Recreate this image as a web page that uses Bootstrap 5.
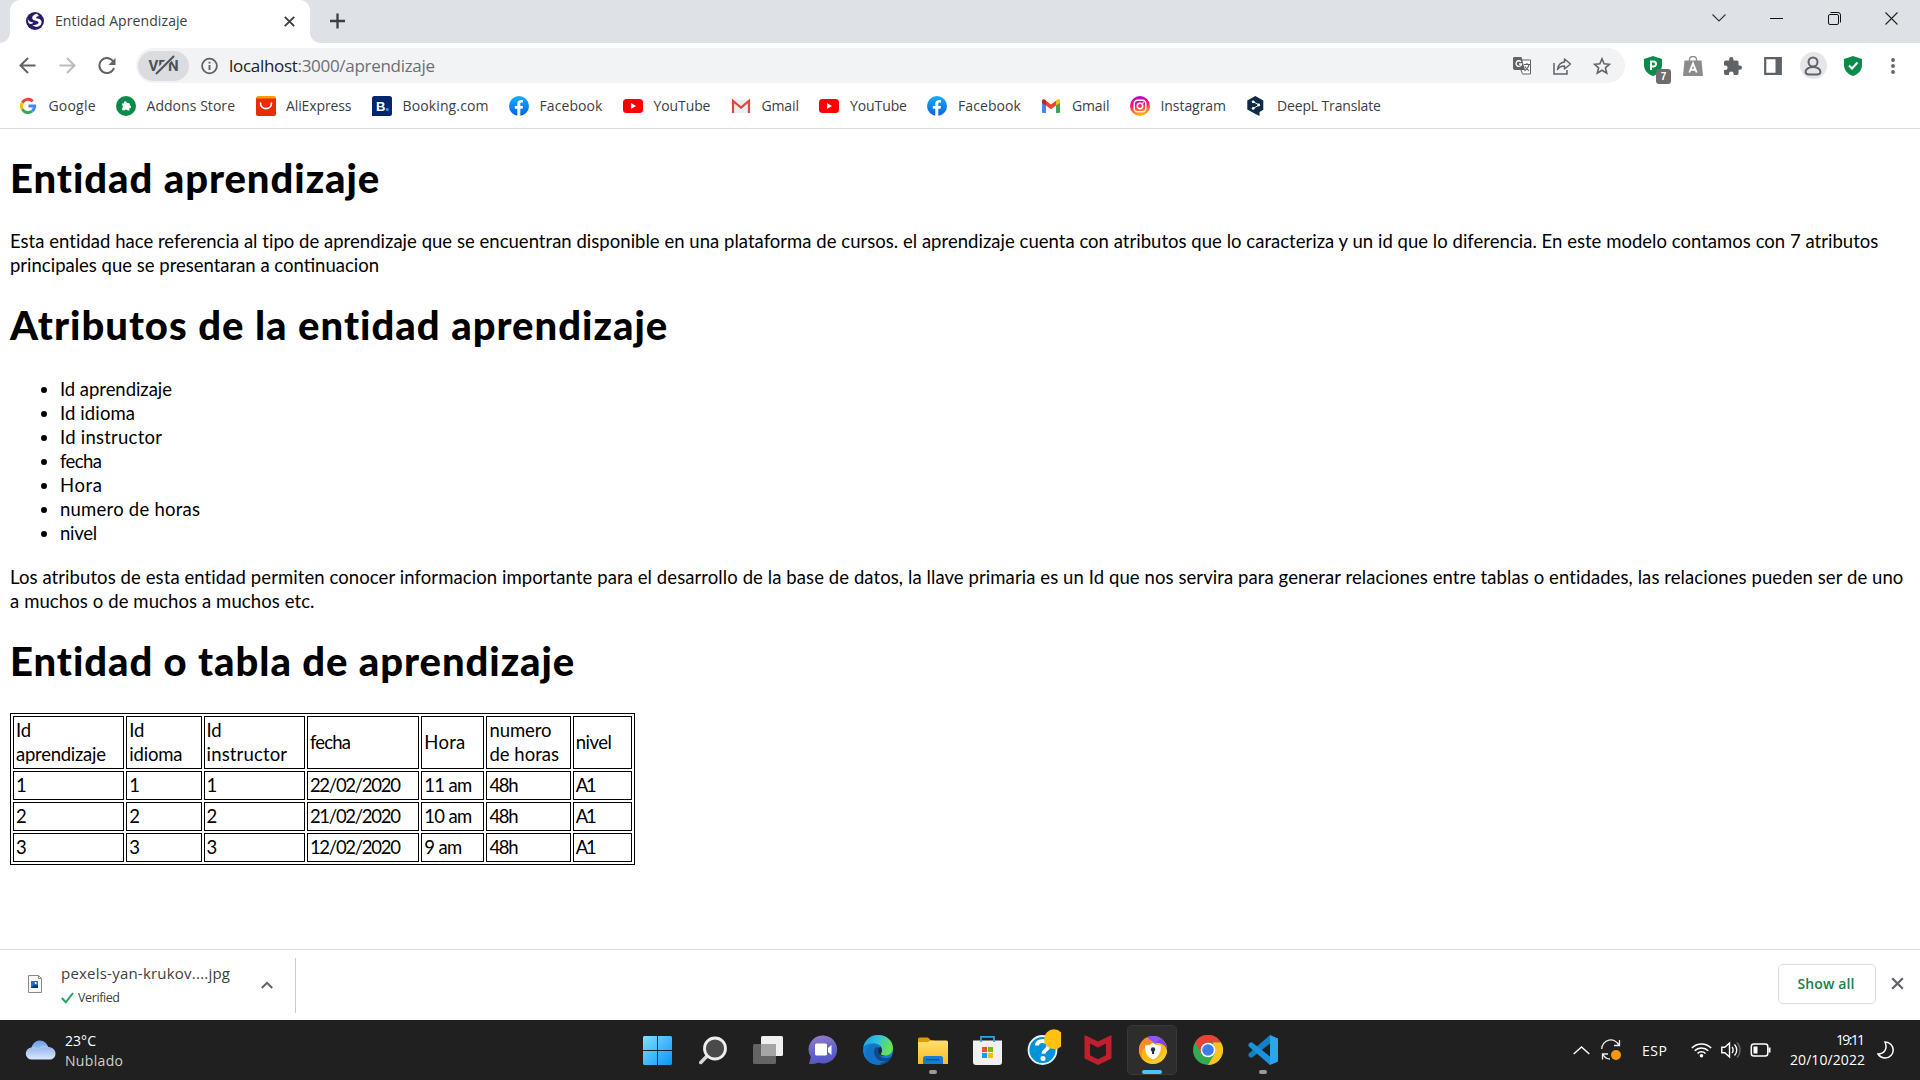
<!DOCTYPE html>
<html lang="es">
<head>
<meta charset="utf-8">
<title>Entidad Aprendizaje</title>
<link href="https://cdn.jsdelivr.net/npm/bootstrap@5.3.0/dist/css/bootstrap.min.css" rel="stylesheet">
<style>
body{width:1920px;height:1080px;overflow:hidden;font-family:"Open Sans","Noto Sans",sans-serif;font-size:14px;color:#3c4043;background:#fff}
svg{display:block;flex:none}
[data-w]{display:inline-block;white-space:nowrap}
.tabstrip{height:43px;background:#dee1e6;padding-left:10px}
.browser-tab{width:300px;height:43px;background:#fff;border-radius:10px 10px 0 0;padding:0 15px 1px 16px}
.browser-tab::before,.browser-tab::after{content:"";position:absolute;bottom:0;width:10px;height:10px}
.browser-tab::before{left:-10px;background:radial-gradient(circle at 0 0,#dee1e6 9.5px,#fff 10px)}
.browser-tab::after{right:-10px;background:radial-gradient(circle at 100% 0,#dee1e6 9.5px,#fff 10px)}
.tab-title{margin-left:11px;line-height:20px}
.win-btn{width:57.3px;height:36px}
.toolbar{height:45px;padding:0 7px 0 7px}
.slot{width:40px;height:40px;flex:none}
.omnibox{height:35px;background:#f1f3f4;border-radius:18px;margin:0 8px 0 9px;padding:0 3px 0 2px}
.vpn{width:51px;height:30px;border-radius:15px;background:#dadce0;color:#4d5156;font:700 15px/30px Roboto,sans-serif}
.vpn svg{position:absolute;left:16px;top:3px}
.url{font-size:17px;line-height:24px;padding-left:3px;color:#202124}
.url .path{color:#6b6f73}
.ext-count{right:2px;bottom:2px;width:15px;height:15px;border-radius:3px;background:#6e6e6e;color:#fff;font:700 10px/15px "Liberation Sans",sans-serif;text-align:center}
.avatar-bg{width:27px;height:27px;background:#e4e6ea}
.bookmarks{height:41px;padding:0 18px 5px;border-bottom:1px solid #d9dbdd;gap:20.5px}
.bookmarks>div{gap:10.5px;line-height:20px}
.page{height:820px;padding:26px 10px 0;color:#000;font:18.5px/24px Lato,"Noto Sans",sans-serif}
.page h1{font:900 40px/46px Lato,sans-serif;margin:0}
.page .gap-title{margin-top:25px}
.page ul{padding-left:50px;margin:28.5px 0 20px}
.entity{border:1px solid #000;border-collapse:separate;border-spacing:2.5px 2px;table-layout:fixed;width:625px;margin-top:29px}
.entity td{border:1px solid #000;padding:1px 1px 1px 2px;height:29px;white-space:nowrap;overflow:hidden}
.entity tr:first-child td{height:53px}
.downloads{height:71px;border-top:1px solid #d9dbdd;padding-left:28px;padding-right:16px}
.dl-item{width:268px;height:55px;border-right:1px solid #c9cccf;margin-top:8px}
.dl-text{padding:5px 0 0 3px}
.dl-name{font-size:15px;line-height:20px}
.dl-state{font-size:12.5px;line-height:20px;padding-top:5px}
.dl-item .dl-caret{margin:23px 22px 0 auto}
.show-all{width:98px;height:40px;border:1px solid #dadce0;border-radius:5px;color:#188048;font-weight:600;margin-right:15px;padding-right:2px}
.dl-actions{padding-bottom:3px}
.taskbar{height:60px;background:#202020;color:#fff;padding-left:25px}
.weather{width:605px;line-height:20px}
.weather-text{padding:2px 0 0 1px}
.sky{color:#cfcfcf}
.app{width:55px;height:60px;flex:none}
.running::after{content:"";position:absolute;left:24px;top:50px;width:8px;height:4px;border-radius:2px;background:#9a9a9a}
.active-app::before{content:"";position:absolute;left:2px;top:5px;width:50px;height:50px;border-radius:5px;background:#2d2d2d;border:1px solid #383838}
.active-app::after{content:"";position:absolute;left:17px;top:50px;width:20px;height:4px;border-radius:2px;background:#4cc2ff}
.active-app svg{position:relative}
.tray{padding-right:26px}
.tray .lang{margin-left:12px}
.tray .battery{margin-left:9px;margin-right:-2px}
.clock{line-height:20px;text-align:right}
</style>
<script src="https://cdn.jsdelivr.net/npm/bootstrap@5.3.0/dist/js/bootstrap.bundle.min.js"></script>
</head>
<body class="d-flex flex-column m-0">

<header>
  <div class="tabstrip d-flex">
    <div class="browser-tab position-relative d-flex align-items-center">
      <svg width="18" height="18" viewBox="0 0 18 18"><circle cx="9" cy="9" r="9" fill="#2b1b66"/><path d="M11 1.800C7.500 2.500 5.500 5 6.500 7s6 1.500 6 3.500-3.500 2.500-6 2.500c2 2.500 6 2.500 8.500-.5 2-4-1-5.500-3.500-6S10 4.500 13 4z" fill="#fff"/><path d="M1.500 6c1 3.500 3 4 6 4.500-1 1.500-3.500 2-5 .5z" fill="#fff"/></svg>
      <span class="tab-title"><span data-w="132.500">Entidad Aprendizaje</span></span>
      <svg class="ms-auto" width="11" height="11" viewBox="0 0 11 11" stroke="#3c4043" stroke-width="1.900"><path d="M.8.8l9.400 9.400M10.200.8L.8 10.200"/></svg>
    </div>
    <svg class="ms-3 mt-2" width="24" height="26" viewBox="0 0 24 26" stroke="#3c4043" stroke-width="2.300"><path d="M11.500 5.500v15M4 13h15"/></svg>
    <div class="ms-auto d-flex">
      <div class="win-btn d-flex align-items-center justify-content-center"><svg width="14" height="8" viewBox="0 0 14 8" fill="none" stroke="#333" stroke-width="1.100"><path d="M.5.5L7 7 13.500.5"/></svg></div>
      <div class="win-btn d-flex align-items-center justify-content-center"><svg width="13" height="3" viewBox="0 0 13 3"><path d="M0 1h13v1H0z" fill="#111"/></svg></div>
      <div class="win-btn d-flex align-items-center justify-content-center"><svg width="13" height="13" viewBox="0 0 13 13" fill="none" stroke="#111"><rect x=".5" y="2.500" width="10" height="10" rx="1.500"/><path d="M2.500.5H10A2.500 2.500 0 0 1 12.500 3v7.500"/></svg></div>
      <div class="win-btn d-flex align-items-center justify-content-center"><svg width="13" height="13" viewBox="0 0 13 13" stroke="#222" stroke-width="1.100"><path d="M.5.5l12 12M12.500.5l-12 12"/></svg></div>
    </div>
  </div>

  <div class="toolbar d-flex align-items-center">
    <div class="slot d-flex align-items-center justify-content-center"><svg width="17" height="17" viewBox="0 0 17 17" fill="none" stroke="#5f6368" stroke-width="2"><path d="M16.500 8.500H1.800M9 1L1.500 8.500 9 16"/></svg></div>
    <div class="slot d-flex align-items-center justify-content-center"><svg width="17" height="17" viewBox="0 0 17 17" fill="none" stroke="#babcbe" stroke-width="2"><path d="M.5 8.500h14.700M8 1l7.500 7.500L8 16"/></svg></div>
    <div class="slot d-flex align-items-center justify-content-center"><svg width="18" height="18" viewBox="0 0 18 18" fill="none" stroke="#5f6368" stroke-width="2"><path d="M15.500 5A7.500 7.500 0 1 0 16 11"/><path d="M17.500 1v7h-7z" fill="#5f6368" stroke="none"/></svg></div>
    <div class="omnibox d-flex align-items-center flex-grow-1">
      <div class="vpn position-relative text-center"><span data-w="30">VPN</span><svg width="22" height="22" viewBox="0 0 22 22"><path d="M1 20L19 2" stroke="#dadce0" stroke-width="5"/><path d="M2 20L20 2" stroke="#4d5156" stroke-width="2"/></svg></div>
      <svg class="ms-2 me-1" width="25" height="18" viewBox="-4 0 25 18" fill="none" stroke="#5f6368"><circle cx="8.500" cy="9" r="7.400" stroke-width="1.800"/><path d="M8.500 8v5M8.500 4.800v1.800" stroke-width="1.900"/></svg>
      <div class="url"><span data-w="206">localhost<span class="path">:3000/aprendizaje</span></span></div>
      <div class="ms-auto d-flex">
        <div class="slot d-flex align-items-center justify-content-center"><svg width="19" height="18" viewBox="0 0 19 18"><path d="M8 3h9.500v14H9.500L8 13z" fill="#fff" stroke="#5f6368"/><path d="M1 0h7.500l3.500 13H2a2 2 0 0 1-2-2V1.500A1.500 1.500 0 0 1 1 0z" fill="#5f6368"/><path d="M8 4.800A2.800 2.800 0 1 0 8.600 7H6" fill="none" stroke="#fff" stroke-width="1.300"/><path d="M11 7.500h6M14 6v1.500M16 7.500c-.5 3-2.500 5-4.500 6.500M12 9.500c1 2 2.500 3 4 4.500" fill="none" stroke="#5f6368" stroke-width="1.100"/></svg></div>
        <div class="slot d-flex align-items-center justify-content-center"><svg width="19" height="18" viewBox="0 0 19 18" fill="none" stroke="#5f6368" stroke-width="1.500"><path d="M1 6v11h13v-4"/><path d="M11.500 2l6 5-6 5V9C8 9 6 10 4.500 12.500 5 8.500 7.500 5.500 11.500 5z" stroke-linejoin="round"/></svg></div>
        <div class="slot d-flex align-items-center justify-content-center"><svg width="18" height="18" viewBox="0 0 18 18" fill="none" stroke="#5f6368" stroke-width="1.600"><path d="M9 1.800l2.100 5 5.400.5-4.100 3.500 1.300 5.300L9 13.300l-4.700 2.800 1.300-5.300-4.100-3.500 5.400-.5z"/></svg></div>
      </div>
    </div>
    <div class="slot position-relative d-flex align-items-center justify-content-center"><svg width="18" height="20" viewBox="0 0 18 20"><path d="M9 0l9 3v6c0 5-3.500 9-9 11C3.500 18 0 14 0 9V3z" fill="#0b8a4b"/><path d="M7 14V5.500h2.500a2.500 2.500 0 0 1 0 5H7" fill="none" stroke="#fff" stroke-width="2"/></svg><span class="ext-count position-absolute">7</span></div>
    <div class="slot d-flex align-items-center justify-content-center"><svg width="20" height="20" viewBox="0 0 20 20"><path d="M1.500 4.500h17L20 20H0z" fill="#8b8b8b"/><path d="M6.500 5V3a3 3 0 0 1 3-2.500h1a3 3 0 0 1 3 2.500v2" fill="none" stroke="#8b8b8b" stroke-width="1.300"/><path d="M6.300 16.500L10 7.500l3.700 9M7.500 13.800h5" fill="none" stroke="#fff" stroke-width="1.900"/></svg></div>
    <div class="slot d-flex align-items-center justify-content-center"><svg width="18" height="18" viewBox="2 1 21 21" fill="#5f6368"><path d="M20.500 11H19V7a2 2 0 0 0-2-2h-4V3.500a2.500 2.500 0 0 0-5 0V5H4a2 2 0 0 0-2 2v3.800h1.500a2.700 2.700 0 0 1 0 5.400H2V20a2 2 0 0 0 2 2h3.800v-1.500a2.700 2.700 0 0 1 5.400 0V22H17a2 2 0 0 0 2-2v-4h1.500a2.500 2.500 0 0 0 0-5z"/></svg></div>
    <div class="slot d-flex align-items-center justify-content-center"><svg width="18" height="18" viewBox="0 0 18 18"><path d="M1.200 1.200h15.600v15.600H1.200z" fill="none" stroke="#5f6368" stroke-width="2.200"/><path d="M11.500 1H17v16h-5.500z" fill="#5f6368"/></svg></div>
    <div class="slot d-flex align-items-center justify-content-center"><div class="avatar-bg rounded-circle d-flex align-items-center justify-content-center"><svg width="18" height="20" viewBox="0 0 18 20" fill="none" stroke="#5f6368" stroke-width="2"><circle cx="9" cy="6" r="4.500"/><path d="M1.500 16c0-3 3.500-5 7.500-5s7.500 2 7.500 5-4 2.500-7.500 2.500S1.500 19 1.500 16z"/></svg></div></div>
    <div class="slot d-flex align-items-center justify-content-center"><svg width="18" height="20" viewBox="0 0 18 20"><path d="M9 0l9 3v6c0 5-3.500 9-9 11C3.500 18 0 14 0 9V3z" fill="#0b8a4b"/><path d="M5 9.500l3 3 5.500-6" fill="none" stroke="#fff" stroke-width="2"/></svg></div>
    <div class="slot d-flex align-items-center justify-content-center"><svg width="4" height="16" viewBox="0 0 4 16" fill="#5f6368"><circle cx="2" cy="2" r="1.900"/><circle cx="2" cy="8" r="1.900"/><circle cx="2" cy="14" r="1.900"/></svg></div>
  </div>

  <svg width="0" height="0" class="position-absolute">
    <defs>
      <linearGradient id="fbg" x2="0" y2="1"><stop stop-color="#19aefb"/><stop offset="1" stop-color="#0062e0"/></linearGradient>
      <linearGradient id="igg" x1=".3" y1="0" x2=".5" y2="1"><stop stop-color="#b000e8"/><stop offset=".45" stop-color="#ff1070"/><stop offset="1" stop-color="#ffc800"/></linearGradient>
      <symbol id="fb" viewBox="0 0 20 20"><circle cx="10" cy="10" r="10" fill="url(#fbg)"/><path d="M8.300 20v-7.200H5.800V10h2.500V7.800C8.300 5.300 9.800 4 12 4c1 0 2 .2 2 .2v2.400h-1.200c-1.200 0-1.500.7-1.500 1.500V10H14l-.5 2.800h-2.200V20z" fill="#fff"/></symbol>
      <symbol id="yt" viewBox="0 0 20 20"><rect y="3" width="20" height="14" rx="3.500" fill="#f00"/><path d="M8 7l5 3-5 3z" fill="#fff"/></symbol>
    </defs>
  </svg>
  <nav class="bookmarks d-flex align-items-center">
    <div class="d-flex align-items-center"><svg width="20" height="20" viewBox="-1.500 -1.500 21 21" fill="none" stroke-width="3"><path d="M14 4A7 7 0 0 0 3 5.500" stroke="#ea4335"/><path d="M3 5.500a7 7 0 0 0 0 7" stroke="#fbbc05"/><path d="M3 12.500A7 7 0 0 0 13.300 14.500" stroke="#34a853"/><path d="M13.300 14.500A7 7 0 0 0 16 9H9.500" stroke="#4285f4"/></svg><span data-w="47">Google</span></div>
    <div class="d-flex align-items-center"><svg width="20" height="20" viewBox="0 0 20 20"><circle cx="10" cy="10" r="10" fill="#0b8a4b"/><path d="M6 7.500h2a1.500 1.500 0 1 1 2.800-.8l3 .8v2a1.300 1.300 0 1 1-.5 2.500l.2 2.500h-2a1.500 1.500 0 0 0-2.800 0L6 14l.3-2.200a1.300 1.300 0 0 0 0-2.300z" fill="#fff"/></svg><span data-w="88.500">Addons Store</span></div>
    <div class="d-flex align-items-center"><svg width="20" height="20" viewBox="0 0 20 20"><rect width="20" height="20" rx="2.500" fill="#ff9a00"/><path d="M0 2.500h20v15a2.500 2.500 0 0 1-2.500 2.500h-15A2.500 2.500 0 0 1 0 17.500z" fill="#e62e04"/><path d="M4.500 7c0 7.500 11 7.500 11 0" fill="none" stroke="#fff" stroke-width="1.700" stroke-linecap="round"/></svg><span data-w="65.500">AliExpress</span></div>
    <div class="d-flex align-items-center"><svg width="20" height="20" viewBox="0 0 20 20"><path d="M2.500 0h15A2.500 2.500 0 0 1 20 2.500v15a2.500 2.500 0 0 1-2.500 2.500H0V2.500A2.500 2.500 0 0 1 2.500 0z" fill="#00266b"/><text x="4" y="14.800" font-family="Liberation Sans" font-weight="700" font-size="13" fill="#fff">B</text><circle cx="15.200" cy="13.500" r="1.600" fill="#18a4ef"/></svg><span data-w="86">Booking.com</span></div>
    <div class="d-flex align-items-center"><svg width="20" height="20"><use href="#fb"/></svg><span data-w="63">Facebook</span></div>
    <div class="d-flex align-items-center"><svg width="20" height="20"><use href="#yt"/></svg><span data-w="57">YouTube</span></div>
    <div class="d-flex align-items-center"><svg width="20" height="20" viewBox="0 0 20 20"><path d="M1.500 4h17v13h-17z" fill="#ededed"/><path d="M2 17V4.800l8 6.700 8-6.700V17" fill="none" stroke="#d94b40" stroke-width="2.200"/></svg><span data-w="37.500">Gmail</span></div>
    <div class="d-flex align-items-center"><svg width="20" height="20"><use href="#yt"/></svg><span data-w="57">YouTube</span></div>
    <div class="d-flex align-items-center"><svg width="20" height="20"><use href="#fb"/></svg><span data-w="63">Facebook</span></div>
    <div class="d-flex align-items-center"><svg width="20" height="20" viewBox="0 0 20 20"><path d="M1 6l4 3v8H2a1 1 0 0 1-1-1z" fill="#4285f4"/><path d="M19 6l-4 3v8h3a1 1 0 0 0 1-1z" fill="#34a853"/><path d="M5 4.800l5 3.700 5-3.700V9.500l-5 3.800-5-3.800z" fill="#ea4335"/><path d="M1 7V5c0-2 2-2.200 3.200-1.200L5 4.500v5z" fill="#c5221f"/><path d="M19 7V5c0-2-2-2.200-3.200-1.200l-.8.700v5z" fill="#fbbc04"/></svg><span data-w="37.500">Gmail</span></div>
    <div class="d-flex align-items-center"><svg width="20" height="20" viewBox="0 0 20 20" fill="none" stroke="#fff" stroke-width="1.500"><circle cx="10" cy="10" r="10" fill="url(#igg)" stroke="none"/><rect x="4.200" y="4.200" width="11.600" height="11.600" rx="3.400"/><circle cx="10" cy="10" r="2.700"/><circle cx="13.300" cy="6.700" r=".8" fill="#fff" stroke="none"/></svg><span data-w="65.500">Instagram</span></div>
    <div class="d-flex align-items-center"><svg width="20" height="20" viewBox="0 0 20 20"><path d="M9.300 0L17.300 4.500v9.300L13.500 16v4L9 17.800 1.300 13.500v-9z" fill="#0f2b46"/><path d="M7.500 5.800l5.500 3.200-5.500 3.400" fill="none" stroke="#fff"/><circle cx="7.200" cy="5.800" r="1.400" fill="#fff"/><circle cx="12.700" cy="9" r="1.400" fill="#fff"/><circle cx="7.200" cy="12.400" r="1.400" fill="#fff"/></svg><span data-w="104">DeepL Translate</span></div>
  </nav>
</header>

<main class="page">
  <h1><span data-w="370">Entidad aprendizaje</span></h1>
  <p class="mb-0 pt-1 mt-4"><span data-w="1869">Esta entidad hace referencia al tipo de aprendizaje que se encuentran disponible en una plataforma de cursos. el aprendizaje cuenta con atributos que lo caracteriza y un id que lo diferencia. En este modelo contamos con 7 atributos</span><br><span data-w="369">principales que se presentaran a continuacion</span></p>
  <h1 class="gap-title"><span data-w="658">Atributos de la entidad aprendizaje</span></h1>
  <ul>
    <li><span data-w="112">Id aprendizaje</span></li>
    <li><span data-w="75">Id idioma</span></li>
    <li><span data-w="102">Id instructor</span></li>
    <li><span data-w="42">fecha</span></li>
    <li><span data-w="42">Hora</span></li>
    <li><span data-w="140">numero de horas</span></li>
    <li><span data-w="37">nivel</span></li>
  </ul>
  <p class="mb-0"><span data-w="1894">Los atributos de esta entidad permiten conocer informacion importante para el desarrollo de la base de datos, la llave primaria es un Id que nos servira para generar relaciones entre tablas o entidades, las relaciones pueden ser de uno</span><br><span data-w="304.500">a muchos o de muchos a muchos etc.</span></p>
  <h1 class="gap-title"><span data-w="565">Entidad o tabla de aprendizaje</span></h1>
  <table class="entity">
    <colgroup><col width="111"><col width="75"><col width="101"><col width="112"><col width="63"><col width="84"><col width="59"></colgroup>
    <tbody>
    <tr><td><span data-w="15">Id</span><br><span data-w="90">aprendizaje</span></td><td><span data-w="15">Id</span><br><span data-w="53">idioma</span></td><td><span data-w="15">Id</span><br><span data-w="80.500">instructor</span></td><td><span data-w="41">fecha</span></td><td><span data-w="41">Hora</span></td><td><span data-w="62">numero</span><br><span data-w="69.500">de horas</span></td><td><span data-w="36">nivel</span></td></tr>
    <tr><td>1</td><td>1</td><td>1</td><td><span data-w="91">22/02/2020</span></td><td><span data-w="48">11 am</span></td><td><span data-w="29">48h</span></td><td><span data-w="21">A1</span></td></tr>
    <tr><td>2</td><td>2</td><td>2</td><td><span data-w="91">21/02/2020</span></td><td><span data-w="48">10 am</span></td><td><span data-w="29">48h</span></td><td><span data-w="21">A1</span></td></tr>
    <tr><td>3</td><td>3</td><td>3</td><td><span data-w="91">12/02/2020</span></td><td><span data-w="38">9 am</span></td><td><span data-w="29">48h</span></td><td><span data-w="21">A1</span></td></tr>
    </tbody>
  </table>
</main>

<section class="downloads d-flex">
  <div class="dl-item d-flex">
    <svg class="mt-3" width="14" height="20" viewBox="0 0 14 20"><path d="M.5 1.500h10l3 3v14H.5z" fill="#fafafa" stroke="#8a8a8a"/><path d="M10.500 1.500v3h3" fill="none" stroke="#8a8a8a"/><path d="M3 7h7v7H3z" fill="#1b6fc4"/><path d="M3 14l3-3 2 1 2-1v3z" fill="#0a3768"/><circle cx="7.700" cy="9" r="1" fill="#fff"/></svg>
    <div class="dl-text ms-3">
      <div class="dl-name"><span data-w="169">pexels-yan-krukov....jpg</span></div>
      <div class="dl-state d-flex align-items-center"><svg class="me-1" width="13" height="12" viewBox="0 0 13 12" fill="none" stroke="#1ea362" stroke-width="2"><path d="M.8 6l4 4.300L12 1"/></svg><span data-w="42">Verified</span></div>
    </div>
    <svg class="dl-caret" width="12" height="8" viewBox="0 0 12 8" fill="none" stroke="#5f6368" stroke-width="2"><path d="M.8 7L6 1.800 11.200 7"/></svg>
  </div>
  <div class="dl-actions ms-auto d-flex align-items-center">
    <div class="show-all d-flex align-items-center justify-content-center"><span data-w="57">Show all</span></div>
    <svg width="13" height="13" viewBox="0 0 13 13" stroke="#5f6368" stroke-width="2.200"><path d="M1.200 1.200l10.600 10.600M11.800 1.200L1.200 11.800"/></svg>
  </div>
</section>

<footer class="taskbar d-flex align-items-center">
  <div class="weather d-flex align-items-center">
    <svg width="31" height="20" viewBox="0 0 31 20"><defs><linearGradient id="cl" x2="0" y2="1"><stop stop-color="#6f9be8"/><stop offset="1" stop-color="#dbe8fc"/></linearGradient></defs><path d="M7 19.500a6 6 0 0 1-.5-12C8 3 11 .5 15 .5s7.500 3 8 6.500c4 0 7.500 2.500 7.500 6.500s-3 6-6 6z" fill="url(#cl)"/><path d="M6.500 8c3-.5 5 .5 6.500 2 2-3 6-4 10-3" fill="none" stroke="#a7c4f5" stroke-width="1.500"/></svg>
    <div class="weather-text ms-2"><div><span data-w="31">23°C</span></div><div class="sky"><span data-w="58">Nublado</span></div></div>
  </div>
  <div class="app d-flex align-items-center justify-content-center"><svg width="29" height="29" viewBox="0 0 29 29"><defs><linearGradient id="wn" x2="1" y2="1"><stop stop-color="#80dfff"/><stop offset="1" stop-color="#0a95f5"/></linearGradient></defs><path d="M1 0h13v14H0V1zM15 0h13l1 1v13H15zM0 15h14v14H1l-1-1zM15 15h14v13l-1 1H15z" fill="url(#wn)"/></svg></div>
  <div class="app d-flex align-items-center justify-content-center"><svg width="28" height="29" viewBox="0 0 28 29"><path d="M10 18L1.800 26.500" stroke="#d5d8dc" stroke-width="3.500" stroke-linecap="round"/><circle cx="16" cy="12.500" r="10.500" fill="#4a4a4a" stroke="#eceef0" stroke-width="2.800"/></svg></div>
  <div class="app d-flex align-items-center justify-content-center"><svg width="30" height="29" viewBox="0 0 30 29"><rect y="8" width="23" height="20" rx="1.500" fill="#646464"/><rect x="8" width="22" height="20" rx="1.500" fill="#f0f0f0"/><path d="M8 8h15v12H9l-1-1z" fill="#a5a5a5"/></svg></div>
  <div class="app d-flex align-items-center justify-content-center"><svg width="30" height="30" viewBox="0 0 30 30"><defs><linearGradient id="ch" x2=".2" y2="1"><stop stop-color="#9a7cc4"/><stop offset=".6" stop-color="#6264cf"/><stop offset="1" stop-color="#5558c2"/></linearGradient></defs><path d="M15.500.5a14 14 0 1 1-5 27.200c-3 1.200-6 1.300-9.500 1.200l1.800-7A14 14 0 0 1 15.500.5z" fill="url(#ch)"/><rect x="7" y="8.500" width="12" height="12" rx="1.500" fill="#fff"/><path d="M20 13l3.500-3v10L20 17z" fill="#fff"/></svg></div>
  <div class="app d-flex align-items-center justify-content-center"><svg width="30" height="30" viewBox="0 0 30 30"><defs><linearGradient id="e1" x2="1" y2=".3"><stop stop-color="#1d9be6"/><stop offset=".5" stop-color="#2fc3dc"/><stop offset="1" stop-color="#6be34d"/></linearGradient></defs><circle cx="15" cy="15" r="15" fill="#0f7fd8"/><path d="M.3 12C2 4.500 8 0 15 0c9 0 15 6 15 13 0 5-4 7.500-8 7.500-3 0-5-1-4-2.500 2-2.500 1.500-8-5-9.500C8 7.500 3 9 .3 12z" fill="url(#e1)"/><path d="M12 12c-5 6-2 15 7 17.500C25 28 28 24 28.500 21.500c-6 3.500-12.500 1-13-4.500-.1-2 .5-3.500 1.500-4.500z" fill="#114a8c"/><path d="M16 11c-4 0-6.500 5-4 10 2 4 6 6 11 4.500-7 6-18 4-20-4.500C2 13 8 7 16 11z" fill="#1272c4"/><path d="M18.300 18c-1.300 2 1 3 4.500 2.700-4 1.500-7.800-1-7.700-4.700.1-2 1-3.500 2.300-4.500 1.700 2 2 4.500.9 6.500z" fill="#1d2b30"/></svg></div>
  <div class="app running position-relative d-flex align-items-center justify-content-center"><svg width="30" height="27" viewBox="0 0 30 27"><defs><linearGradient id="fo" x2="0" y2="1"><stop stop-color="#ffdf70"/><stop offset="1" stop-color="#fcba1e"/></linearGradient></defs><path d="M1.500.5H10l3 3h3v4H0V2A1.500 1.500 0 0 1 1.500.5z" fill="#e09a05"/><path d="M0 5h10l2.500-1.500h16A1.500 1.500 0 0 1 30 5v22H0z" fill="url(#fo)"/><path d="M5 27v-5.500A2.500 2.500 0 0 1 7.500 19h15a2.500 2.500 0 0 1 2.500 2.500V27z" fill="#1180d0"/><path d="M8 22.700h13" stroke="#0b5295" stroke-width="1.300"/></svg></div>
  <div class="app d-flex align-items-center justify-content-center"><svg width="29" height="29" viewBox="0 0 29 29"><path d="M0 4.500h29V26a3 3 0 0 1-3 3H3a3 3 0 0 1-3-3z" fill="#f0f0f0"/><path d="M8 6V.9h13V6" fill="none" stroke="#24a8e0" stroke-width="1.800"/><path d="M9 11h5v5H9z" fill="#f25022"/><path d="M15 11h5v5h-5z" fill="#7fba00"/><path d="M9 17h5v5H9z" fill="#00a4ef"/><path d="M15 17h5v5h-5z" fill="#ffb900"/></svg></div>
  <div class="app d-flex align-items-center justify-content-center"><svg width="36" height="42" viewBox="-3 -6 36 42"><circle cx="14.500" cy="15" r="14" fill="#0093d8" stroke="#e8f4fa" stroke-width="1.800"/><path d="M9 10.500C9 7.500 11.500 6 14.500 6c3.500 0 6 1.800 6 4.800 0 4-5 4-5 8" fill="none" stroke="#fff" stroke-width="4"/><circle cx="15" cy="23.500" r="2.500" fill="#fff"/><circle cx="26" cy="4.300" r="10" fill="#ffc20e"/></svg></div>
  <div class="app d-flex align-items-center justify-content-center"><svg width="28" height="30" viewBox="0 0 28 30"><path d="M.5 0L14 6.500 27.500 0v23.500L14 30 .5 23.500z" fill="#c01f2e"/><path d="M6 8.500l8 4 8-4V20.300l-8 4-8-4z" fill="#202020"/></svg></div>
  <div class="app active-app position-relative d-flex align-items-center justify-content-center"><svg width="28" height="28" viewBox="0 0 28 28"><circle cx="14" cy="14" r="14" fill="#fcb813"/><path d="M8 1.400A14 14 0 0 1 28 14c-2-5-5-7-10-7z" fill="#7a42e8"/><path d="M8 1.400A14 14 0 0 1 22 2.500L16 8z" fill="#8e56ff"/><path d="M8 1.400A14 14 0 0 0 3 22.500C2 14 6 9 14 7z" fill="#ff8a2a"/><path d="M3 22.500C10 27 19 25 24 17c1-3 3-4 4-3a14 14 0 0 1-25 8.500z" fill="#f3cf2e"/><path d="M6 9.500c3.500 0 6-.8 8-2.500 2 1.700 4.500 2.500 8 2.500 0 7-2 11.500-8 14-6-2.500-8-7-8-14z" fill="#fff"/><circle cx="14" cy="13.500" r="2.200" fill="#283048"/><path d="M13 14h2v4h-2z" fill="#283048"/></svg></div>
  <div class="app d-flex align-items-center justify-content-center"><svg width="30" height="30" viewBox="0 0 30 30"><circle cx="15" cy="15" r="15" fill="#34a853"/><path d="M2 7.500A15 15 0 0 1 28 7.500H15L8.500 18.700z" fill="#ea4335"/><path d="M28 7.500A15 15 0 0 1 15 30l6.500-11.300L20 7.500z" fill="#fcc31e"/><circle cx="15" cy="15" r="7.300" fill="#fff"/><circle cx="15" cy="15" r="5.800" fill="#3b7ded"/></svg></div>
  <div class="app running position-relative d-flex align-items-center justify-content-center"><svg width="30" height="30" viewBox="0 0 30 30"><path d="M22 0l8 3.500v23L22 30z" fill="#2ba5ec"/><path d="M22 8.500L3.500 23 .5 21.200v-2.400L22 0z" fill="#1180c8"/><path d="M22 21.500L3.500 7 .5 8.800v2.400L22 30z" fill="#1994dc"/></svg></div>

  <div class="tray ms-auto d-flex align-items-center">
    <svg width="17" height="9" viewBox="0 0 17 9" fill="none" stroke="#fff" stroke-width="1.400"><path d="M.7 8l7.800-7 7.800 7"/></svg>
    <svg class="ms-2 me-1" width="28" height="22" viewBox="-3 0 28 22" fill="none" stroke="#eee" stroke-width="1.300"><path d="M.7 10A9 9 0 0 1 18 6.500M18.500 1v5.500H13M1.500 20.500V15H7M2 15.500c1.500 3 4 4.500 7 4.500"/><circle cx="15" cy="16" r="5" fill="#ff9800" stroke="none"/></svg>
    <span class="lang" data-w="25">ESP</span>
    <svg class="ms-4" width="21" height="16" viewBox="0 0 21 16" fill="none" stroke="#fff" stroke-width="1.500"><path d="M.8 6a13.500 13.500 0 0 1 19.400 0M3.700 8.800a9.500 9.500 0 0 1 13.600 0M6.500 11.500a5.600 5.600 0 0 1 8 0"/><circle cx="10.500" cy="13.700" r="1.800" fill="#fff" stroke="none"/></svg>
    <svg class="ms-2" width="21" height="18" viewBox="-1 0 21 18" fill="none" stroke="#fff" stroke-width="1.400"><path d="M.8 6.200h3L8.500 2v14l-4.700-4.200h-3zM11 6c1.500 1.500 1.500 4.500 0 6M13.500 3.500c3 3 3 8 0 11"/><path d="M16 1.500c4 4 4 11 0 15" stroke="#666"/></svg>
    <svg class="battery" width="22" height="14" viewBox="0 0 22 14" fill="none" stroke="#fff" stroke-width="1.500"><rect x="1.300" y="1" width="16.500" height="12" rx="2.500"/><path d="M19.500 4.500v5" stroke-width="2"/><rect x="3.500" y="3.500" width="4" height="7" fill="#fff" stroke="none"/></svg>
    <div class="clock ms-3 ps-1"><div><span data-w="29">19:11</span></div><div><span data-w="75">20/10/2022</span></div></div>
    <svg class="ms-2 ps-1" width="21" height="18" viewBox="0 0 17 18" fill="none" stroke="#fff" stroke-width="1.500"><path d="M8 1c5 0 8.200 4 8.200 8s-3.200 8-8 8c-3 0-5.500-1.500-7.200-4C7 13 11 8 8 1z"/></svg>
  </div>
</footer>

<script>
// Track each label so that it fills its nominal width
document.querySelectorAll('[data-w]').forEach(function (el) {
  var target = parseFloat(el.dataset.w), n = el.textContent.length;
  var ls = (target - el.getBoundingClientRect().width) / (n - 1);
  el.style.letterSpacing = ls + 'px';
  el.style.marginRight = -ls + 'px';
});
</script>
</body>
</html>
